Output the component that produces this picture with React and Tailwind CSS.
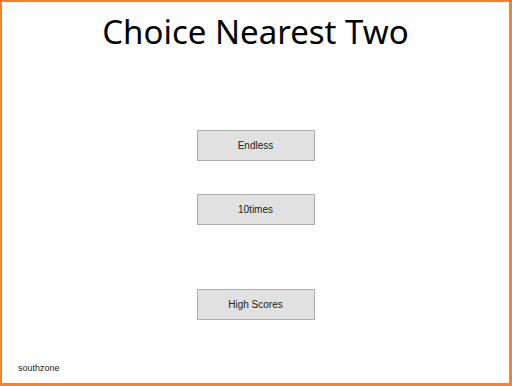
import React from 'react';

const MenuButton = ({ label, className = '' }) => (
  <button
    type="button"
    className={`w-[118px] h-[31px] bg-[#e1e1e1] border border-[#adadad] text-[10px] text-[#222] font-['Liberation_Sans',sans-serif] ${className}`}
  >
    {label}
  </button>
);

export default function App() {
  return (
    <div className="w-[512px] h-[386px] bg-white border-2 border-r-[3px] border-b-[3px] border-[#ff7f27] flex flex-col items-center">
      <h1 className="mt-[8px] text-[33px] leading-[44px] text-black font-['Noto_Sans',sans-serif]">
        Choice Nearest Two
      </h1>

      <div className="flex flex-col items-center mt-[76px]">
        <MenuButton label="Endless" />
        <MenuButton label="10times" className="mt-[33px]" />
        <MenuButton label="High Scores" className="mt-[64px]" />
      </div>

      <p className="mt-auto mb-[8px] self-start ml-[16px] text-[9px] text-[#222] font-['Liberation_Sans',sans-serif]">
        southzone
      </p>
    </div>
  );
}
